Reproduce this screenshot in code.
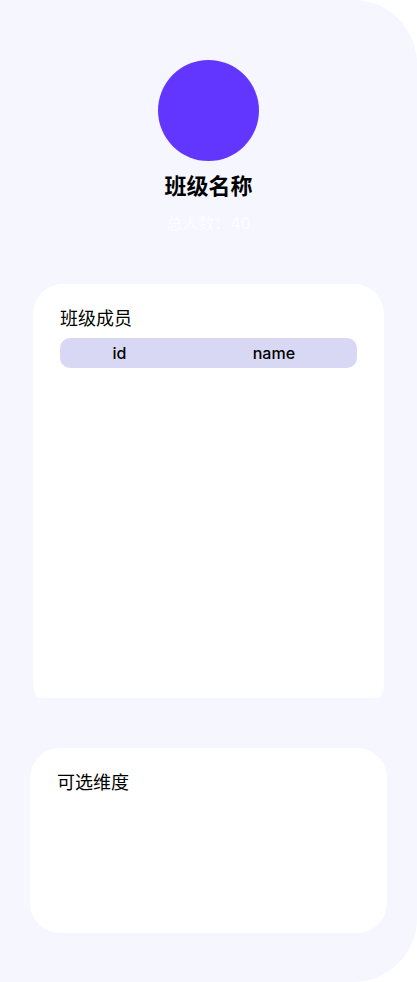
<main class="panel">
  <header>
    <div class="avatar"></div>
    <h1>班级名称</h1>
    <p class="total">总人数：40</p>
  </header>

  <section class="card members">
    <h2>班级成员</h2>
    <table>
      <thead>
        <tr><th scope="col">id</th><th scope="col">name</th></tr>
      </thead>
    </table>
  </section>

  <section class="card dimensions">
    <h2>可选维度</h2>
  </section>
</main>

<style>
  :global(body) {
    margin: 0;
    background: #fff;
  }
  .panel {
    box-sizing: border-box;
    min-height: 100vh;
    padding: 60px 30px 49px;
    border-radius: 0 64px 64px 0;
    background: #f5f6ff;
    color: #000;
    font-family: Inter, "Noto Sans CJK SC", sans-serif;
  }
  header {
    display: flex;
    flex-direction: column;
    align-items: center;
  }
  .avatar {
    width: 101px;
    height: 101px;
    border-radius: 50%;
    background: #6236ff;
  }
  h1 {
    margin: 9px 0 0;
    font-size: 22px;
    line-height: 32px;
    font-weight: 700;
  }
  .total {
    margin: 9px 0 0;
    color: #fdfdff;
    font-size: 16px;
    line-height: 24px;
  }
  .card {
    box-sizing: border-box;
    padding: 22px 27px;
    border-radius: 30px;
    background: #fff;
  }
  h2 {
    margin: 0;
    font-size: 18px;
    line-height: 26px;
    font-weight: 400;
  }
  /* the lower edge is cut off inside the corner curve */
  .members {
    min-height: 429px;
    margin: 49px 3px 0;
    clip-path: inset(0 0 15px 0);
  }
  table {
    width: 100%;
    margin-top: 6px;
    border-spacing: 0;
    table-layout: fixed;
    border-radius: 10px;
    background: #d9d8f4;
  }
  th {
    height: 30px;
    padding: 0;
    font-size: 16px;
    line-height: 20px;
    font-weight: 500;
  }
  th:first-child {
    width: 40%;
  }
  th:last-child {
    padding-left: 12px;
  }
  .dimensions {
    min-height: 185px;
    margin-top: 35px;
  }
</style>
